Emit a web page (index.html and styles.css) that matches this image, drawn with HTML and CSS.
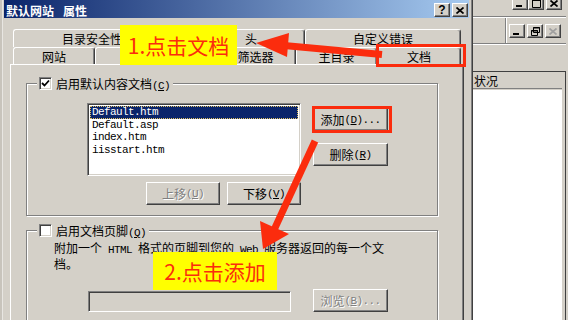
FILE: index.html
```html
<!DOCTYPE html>
<html>
<head>
    <meta charset="UTF-8">
    <title>默认网站 属性</title>
    <link rel="stylesheet" href="styles.css">
</head>
<body>
<div class="desk">
    <div class="edge"></div>

    <div class="dlg">
        <div class="cap">
            <span class="cap-title">默认网站</span>
            <span class="cap-title cap-gap">属性</span>
            <span class="cap-btn cap-help">?</span>
            <span class="cap-btn">
                <svg width="8" height="7" viewBox="0 0 8 7"><path d="M0.5 0.5l7 6M7.5 0.5l-7 6" stroke="#000" stroke-width="1.7"/></svg>
            </span>
        </div>

        <div class="tabs">
            <div class="tabrow back">
                <div class="tab">目录安全性</div>
                <div class="tab tab-http"><span class="en">HTTP&nbsp;</span>头</div>
                <div class="tab">自定义错误</div>
            </div>
            <div class="tabrow front">
                <div class="tab">网站</div>
                <div class="tab">性能</div>
                <div class="tab"><span class="en">ISAPI&nbsp;</span>筛选器</div>
                <div class="tab">主目录</div>
                <div class="tab tab-on">文档</div>
            </div>
        </div>

        <div class="panel">
            <div class="gb gb-docs">
                <div class="gb-head">
                    <span class="chk">
                        <svg width="9" height="9" viewBox="0 0 9 9"><path d="M1 4l2.5 2.5L8 1.5" fill="none" stroke="#000" stroke-width="1.8"/></svg>
                    </span>
                    <span>启用默认内容文档<span class="en">(<u>C</u>)</span></span>
                </div>
                <div class="docs-body">
                    <div class="list-col">
                        <div class="listbox">
                            <div class="item item-on en">Default.htm</div>
                            <div class="item en">Default.asp</div>
                            <div class="item en">index.htm</div>
                            <div class="item en">iisstart.htm</div>
                        </div>
                        <div class="move-row">
                            <span class="btn btn-off">上移<span class="en">(<u>U</u>)</span></span>
                            <span class="btn">下移<span class="en">(<u>V</u>)</span></span>
                        </div>
                    </div>
                    <div class="btn-col">
                        <span class="btn">添加<span class="en">(<u>D</u>)...</span></span>
                        <span class="btn">删除<span class="en">(<u>R</u>)</span></span>
                    </div>
                </div>
            </div>

            <div class="gb gb-foot">
                <div class="gb-head">
                    <span class="chk"></span>
                    <span>启用文档页脚<span class="en">(<u>Q</u>)</span></span>
                </div>
                <p class="desc">附加一个<span class="en">&nbsp;HTML&nbsp;</span>格式的页脚到您的<span class="en">&nbsp;Web&nbsp;</span>服务器返回的每一个文<br>档。</p>
                <div class="foot-row">
                    <span class="field"></span>
                    <span class="btn btn-off">浏览<span class="en">(<u>B</u>)...</span></span>
                </div>
            </div>
        </div>
    </div>

    <div class="mdi">
        <div class="mdi-cap">
            <span class="sbtn"><svg width="8" height="8" viewBox="0 0 8 8"><rect x="0" y="6" width="6" height="2"/></svg></span>
            <span class="sbtn"><svg width="9" height="9" viewBox="0 0 9 9"><path d="M0.5 1.5h8v7h-8z" fill="none" stroke="#000"/><rect x="0" y="0" width="9" height="2"/></svg></span>
            <span class="sbtn sbtn-x"><svg width="8" height="7" viewBox="0 0 8 7"><path d="M0.5 0.5l7 6M7.5 0.5l-7 6" stroke="#000" stroke-width="1.7"/></svg></span>
        </div>
        <div class="mdi-menu">
            <div class="mdi-menu-l"></div>
            <div class="mdi-ctl">
                <span class="sbtn"><svg width="8" height="8" viewBox="0 0 8 8"><rect x="0" y="6" width="6" height="2"/></svg></span>
                <span class="sbtn"><svg width="9" height="9" viewBox="0 0 9 9"><path d="M2.5 0.5h6v5h-6zM0.5 3.5h6v5h-6z" fill="#d4d0c8" stroke="#000"/><path d="M2 1h7M0 4h7" stroke="#000"/></svg></span>
                <span class="sbtn sbtn-x"><svg width="8" height="7" viewBox="0 0 8 7"><path d="M0.5 0.5l7 6M7.5 0.5l-7 6" stroke="#a0a0a0" stroke-width="1.7"/></svg></span>
            </div>
        </div>
        <div class="mdi-tool"></div>
        <div class="mdi-list">
            <div class="mdi-head">状况</div>
            <div class="mdi-body"></div>
        </div>
    </div>
</div>

<div class="anno">
    <div class="note note-1">1.点击文档</div>
    <div class="note note-2">2.点击添加</div>
    <div class="mark mark-tab"></div>
    <div class="mark mark-add"></div>
    <svg class="arrows" width="568" height="320" viewBox="0 0 568 320">
        <line x1="284" y1="45.5" x2="382" y2="54.5" stroke="#fb2c0d" stroke-width="7"/>
        <polygon points="256,43 289,33 287,57" fill="#fb2c0d"/>
        <line x1="315" y1="141" x2="274" y2="230" stroke="#fb2c0d" stroke-width="7"/>
        <polygon points="263,249 260,221 289,234" fill="#fb2c0d"/>
    </svg>
</div>
</body>
</html>
```

FILE: styles.css
```css
* {
    box-sizing: border-box;
}

body {
    margin: 0;
    width: 568px;
    height: 320px;
    overflow: hidden;
    position: relative;
    background-color: #d4d0c8;
    font-family: "Noto Sans CJK SC", sans-serif;
    font-size: 12px;
    color: #000;
}

.en {
    font-family: "Liberation Mono", monospace;
    font-size: 11px;
    letter-spacing: -0.6px;
}

.desk {
    display: flex;
    height: 320px;
}

.edge {
    width: 3px;
    background-color: #c8c4bc;
    border-right: 1px solid #e8e6e2;
}

/* dialog window */
.dlg {
    width: 470px;
    display: flex;
    flex-direction: column;
    padding: 0 3px 0 1px;
    border-right: 1px solid #404040;
    box-shadow: inset -1px 0 #808080;
}

.cap {
    height: 18px;
    display: flex;
    align-items: center;
    padding: 2px 1px 0 2px;
    background: linear-gradient(to right, #0a246a, #a6caf0);
    color: #fff;
    font-weight: bold;
}

.cap-gap {
    margin-left: 9px;
    flex: 1;
}

.cap-btn {
    width: 16px;
    height: 14px;
    margin-left: 2px;
    display: flex;
    align-items: center;
    justify-content: center;
    background-color: #d4d0c8;
    border: 1px solid;
    border-color: #fff #404040 #404040 #fff;
    box-shadow: inset -1px -1px #808080;
    color: #000;
    font-family: "Liberation Sans", sans-serif;
    font-size: 12px;
    font-weight: bold;
}

.tabs {
    margin: 11px 0 0 9px;
}

.tabrow {
    display: grid;
}

.back {
    grid-template-columns: 158px 134px 156px;
    height: 18px;
}

.front {
    grid-template-columns: 82px 84px 117px 81px 84px;
    height: 17px;
}

.tab {
    display: flex;
    align-items: center;
    justify-content: center;
    border-top: 1px solid #fff;
    border-left: 1px solid #fff;
    border-right: 1px solid #404040;
    border-radius: 3px 3px 0 0;
    box-shadow: inset -1px 0 #808080;
    white-space: nowrap;
}

.tab-http {
    padding-right: 8px;
}

.tab-http .en {
    margin-right: 4px;
}

.panel {
    flex: 1;
    width: 454px;
    margin-left: 6px;
    padding: 18px 0 0 15px;
    border-top: 1px solid #fff;
    border-left: 1px solid #fff;
    border-right: 1px solid #404040;
    box-shadow: inset -1px 0 #808080;
}

/* group boxes */
.gb {
    width: 412px;
    border: 1px solid #808080;
    box-shadow: inset 1px 1px #fff, 1px 1px #fff;
}

.gb-head {
    display: flex;
    align-items: center;
    gap: 4px;
    width: fit-content;
    height: 13px;
    margin: -7px 0 0 10px;
    padding: 0 3px 0 2px;
    background-color: #d4d0c8;
}

.chk {
    width: 13px;
    height: 13px;
    display: flex;
    align-items: center;
    justify-content: center;
    background-color: #fff;
    border: 1px solid;
    border-color: #808080 #fff #fff #808080;
    box-shadow: inset 1px 1px #404040, inset -1px -1px #d4d0c8;
}

.gb-docs {
    padding-bottom: 10px;
}

.docs-body {
    display: flex;
    margin: 13px 0 0 60px;
}

.list-col {
    width: 214px;
}

.listbox {
    height: 73px;
    padding: 2px;
    background-color: #fff;
    border: 1px solid;
    border-color: #808080 #fff #fff #808080;
    box-shadow: inset 1px 1px #404040, inset -1px -1px #d4d0c8;
}

.item {
    height: 12.5px;
    line-height: 12.5px;
    padding-left: 2px;
}

.item-on {
    background-color: #0a246a;
    color: #fff;
    outline: 1px dotted #e0c060;
    outline-offset: -1px;
}

.move-row {
    display: flex;
    justify-content: flex-end;
    gap: 7px;
    margin-top: 6px;
}

.btn-col {
    display: flex;
    flex-direction: column;
    gap: 12px;
    margin: 5px 0 0 12px;
}

.btn {
    width: 75px;
    height: 23px;
    display: flex;
    align-items: center;
    justify-content: center;
    background-color: #d4d0c8;
    border: 1px solid;
    border-color: #fff #404040 #404040 #fff;
    box-shadow: inset -1px -1px #808080;
    white-space: nowrap;
}

.move-row .btn {
    width: 74px;
}

.btn-off {
    color: #808080;
    text-shadow: 1px 1px 0 #fff;
}

.gb-foot {
    margin-top: 14px;
    padding-bottom: 20px;
}

.desc {
    margin: 4px 0 0 27px;
    line-height: 14px;
}

.foot-row {
    display: flex;
    align-items: flex-start;
    margin: 18px 0 0 61px;
}

.field {
    width: 203px;
    height: 21px;
    margin: 2px 22px 0 0;
    border: 1px solid;
    border-color: #808080 #fff #fff #808080;
    box-shadow: inset 1px 1px #404040, inset -1px -1px #d4d0c8;
}

/* window behind the dialog */
.mdi {
    flex: 1;
    display: flex;
    flex-direction: column;
    padding-right: 2px;
}

.mdi-cap {
    height: 17px;
    display: flex;
    justify-content: flex-end;
    align-items: flex-start;
    padding-right: 4px;
    border-bottom: 1px solid #808080;
    box-shadow: 0 1px #fff;
}

.mdi-cap .sbtn {
    margin-top: -4px;
}

.mdi-cap .sbtn-x {
    margin-left: 2px;
}

.sbtn {
    width: 16px;
    height: 14px;
    display: flex;
    align-items: center;
    justify-content: center;
    border: 1px solid;
    border-color: #fff #404040 #404040 #fff;
    box-shadow: inset -1px -1px #808080;
}

.mdi-menu {
    height: 26px;
    display: flex;
    margin-top: 1px;
    border-bottom: 1px solid #808080;
    box-shadow: 0 1px #fff;
}

.mdi-menu-l {
    width: 33px;
    border-right: 1px solid #808080;
    box-shadow: 1px 0 #fff;
}

.mdi-ctl {
    display: flex;
    gap: 2px;
    padding: 6px 0 0 3px;
}

.mdi-tool {
    height: 26px;
    margin-top: 1px;
}

.mdi-list {
    flex: 1;
    display: flex;
    flex-direction: column;
    border-top: 1px solid #404040;
    border-right: 1px solid #404040;
    box-shadow: inset -2px 0 #d4d0c8;
}

.mdi-head {
    height: 16px;
    line-height: 15px;
    margin-top: 1px;
    padding-left: 1px;
    border-bottom: 1px solid #808080;
    margin-right: 3px;
}

.mdi-body {
    flex: 1;
    margin-top: 1px;
    margin-right: 3px;
    background-color: #fff;
}

/* tutorial marks drawn over the screenshot */
.anno {
    position: absolute;
    left: 0;
    top: 0;
    width: 568px;
    height: 320px;
}

.note {
    position: absolute;
    display: flex;
    align-items: center;
    justify-content: center;
    background-color: #ffff00;
    color: #fb2c0d;
    font-size: 21px;
    white-space: nowrap;
}

.note-1 {
    left: 120px;
    top: 25px;
    width: 117px;
    height: 40px;
}

.note-2 {
    left: 153px;
    top: 252px;
    width: 124px;
    height: 38px;
}

.mark {
    position: absolute;
    border: 3px solid #fb2c0d;
}

.mark-tab {
    left: 376px;
    top: 44px;
    width: 90px;
    height: 23px;
}

.mark-add {
    left: 312px;
    top: 106px;
    width: 80px;
    height: 27px;
}

.arrows {
    position: absolute;
    left: 0;
    top: 0;
}
```
